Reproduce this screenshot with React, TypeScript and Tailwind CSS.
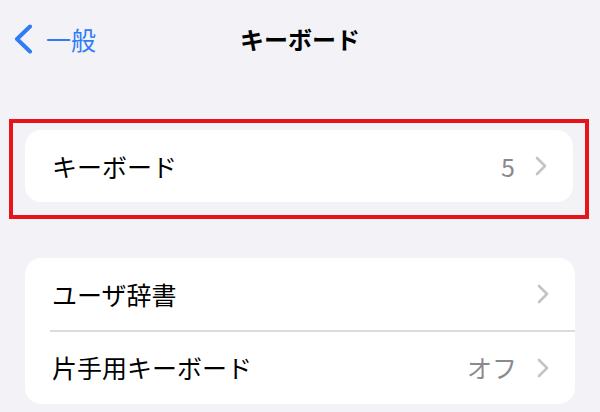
import React from "react";

const font = { fontFamily: '"Noto Sans CJK JP", "Noto Sans", sans-serif' };

function Chevron({ className }: { className?: string }) {
  return (
    <svg width="12" height="20" viewBox="0 0 12 20" className={className}>
      <path d="M2 2 L10 10 L2 18" fill="none" stroke="#c4c4c7" strokeWidth="2.6" strokeLinecap="round" strokeLinejoin="round" />
    </svg>
  );
}

function Row({ label, value }: { label: string; value?: string }) {
  return (
    <div className="h-[72px] flex items-center pl-[27px] pr-[26px]">
      <span className="flex-1 text-[25px] text-black leading-none">{label}</span>
      {value && <span className="text-[25px] text-[#8a8a8e] leading-none mr-[20px]">{value}</span>}
      <Chevron />
    </div>
  );
}

export default function App() {
  return (
    <div className="w-[600px] h-[412px] bg-[#f2f2f7] overflow-hidden" style={font}>
      <div className="h-[78px] relative flex items-center justify-center">
        <div className="absolute left-[14px] top-[24px] flex items-center">
          <svg width="20" height="30" viewBox="0 0 20 30">
            <path d="M16 2.5 L3 15 L16 27.5" fill="none" stroke="#2f7cf6" strokeWidth="4" strokeLinecap="round" strokeLinejoin="round" />
          </svg>
          <span className="ml-[12px] text-[25px] text-[#2f7cf6] leading-none">一般</span>
        </div>
        <span className="text-[24px] font-bold text-black leading-none">キーボード</span>
      </div>
      <div className="mt-[41px] mx-[9px] w-[580px] h-[100px] border-4 border-[#e8141c] px-[12px] pt-[7px]">
        <div className="bg-white rounded-[16px]">
          <Row label="キーボード" value="5" />
        </div>
      </div>
      <div className="mt-[39px] mx-[25px] bg-white rounded-[16px]">
        <Row label="ユーザ辞書" />
        <div className="ml-[25px] h-[1.5px] bg-[#dcdce0]" />
        <Row label="片手用キーボード" value="オフ" />
      </div>
    </div>
  );
}
